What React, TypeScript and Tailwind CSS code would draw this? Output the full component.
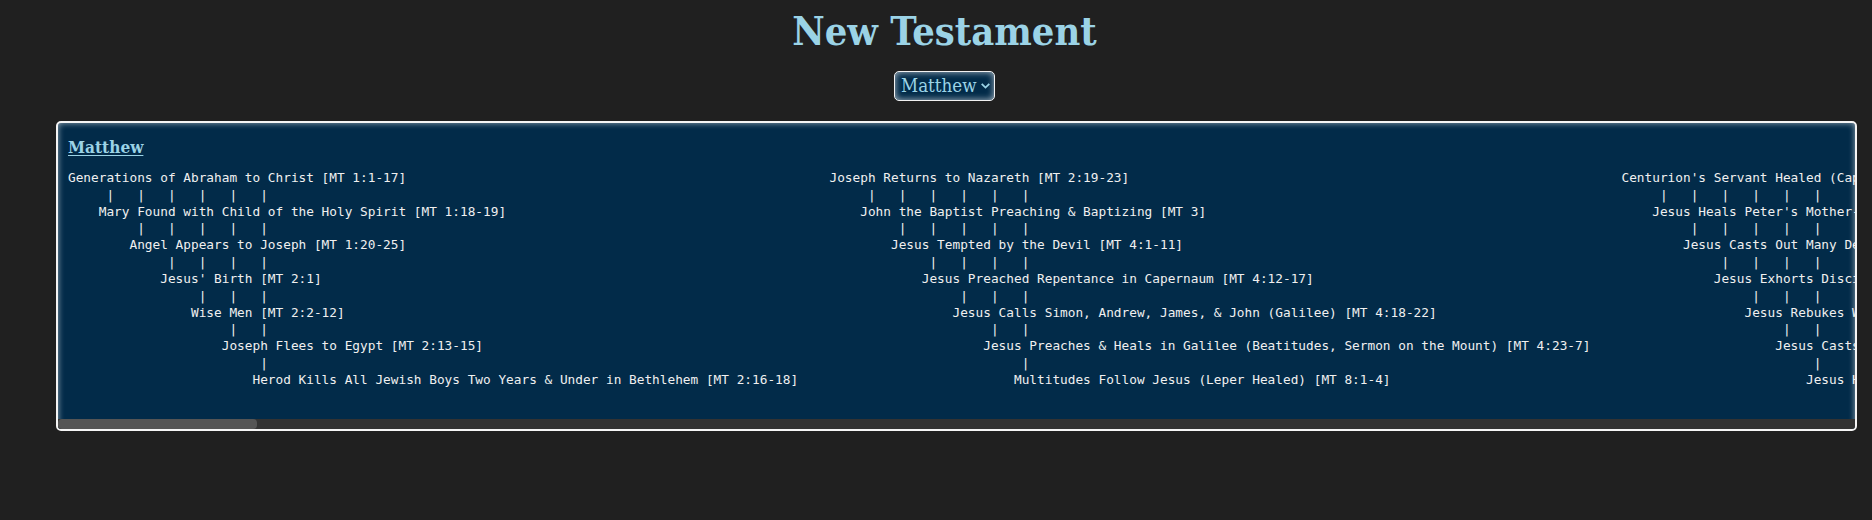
import React from "react";

type Column = { width: string; events: string[] };

const columns: Column[] = [
  {
    width: "w-[761.5px]",
    events: [
      "Generations of Abraham to Christ [MT 1:1-17]",
      "Mary Found with Child of the Holy Spirit [MT 1:18-19]",
      "Angel Appears to Joseph [MT 1:20-25]",
      "Jesus' Birth [MT 2:1]",
      "Wise Men [MT 2:2-12]",
      "Joseph Flees to Egypt [MT 2:13-15]",
      "Herod Kills All Jewish Boys Two Years & Under in Bethlehem [MT 2:16-18]",
    ],
  },
  {
    width: "w-[792px]",
    events: [
      "Joseph Returns to Nazareth [MT 2:19-23]",
      "John the Baptist Preaching & Baptizing [MT 3]",
      "Jesus Tempted by the Devil [MT 4:1-11]",
      "Jesus Preached Repentance in Capernaum [MT 4:12-17]",
      "Jesus Calls Simon, Andrew, James, & John (Galilee) [MT 4:18-22]",
      "Jesus Preaches & Heals in Galilee (Beatitudes, Sermon on the Mount) [MT 4:23-7]",
      "Multitudes Follow Jesus (Leper Healed) [MT 8:1-4]",
    ],
  },
  {
    width: "w-[792px]",
    events: [
      "Centurion's Servant Healed (Cap",
      "Jesus Heals Peter's Mother-",
      "Jesus Casts Out Many De",
      "Jesus Exhorts Disci",
      "Jesus Rebukes W",
      "Jesus Casts",
      "Jesus H",
    ],
  },
];

function cascade(events: string[]): string {
  const lines: string[] = [];
  events.forEach((event, i) => {
    lines.push(" ".repeat(i * 4) + event);
    const bars = events.length - 1 - i;
    if (bars > 0) {
      lines.push(" ".repeat(5 + i * 4) + Array(bars).fill("|").join("   "));
    }
  });
  return lines.join("\n");
}

export default function App() {
  return (
    <main className="flex h-[520px] flex-col overflow-hidden bg-[#202020] font-['DejaVu_Serif_Condensed','DejaVu_Serif',serif] text-[#9bd3e6]">
      <header className="flex flex-col items-center pl-[17px]">
        <h1 className="mt-[6px] h-[50px] whitespace-nowrap text-[39.5px] font-bold leading-[50px] [font-stretch:condensed]">
          New Testament
        </h1>
        <button className="mt-[15px] flex h-[30px] w-[101px] items-center justify-between rounded-[5px] border border-[#f2f2f2] bg-[#022b49] pr-[4px] pl-[6px] text-[18.6px] leading-none [font-stretch:condensed] shadow-[inset_0_0_7px_rgba(255,255,255,0.7)]">
          <span className="pt-px">Matthew</span>
          <svg width="9" height="6" viewBox="0 0 9 6" fill="none" stroke="currentColor" strokeWidth="1.8">
            <path d="M0.7 0.8 4.5 4.6 8.3 0.8" />
          </svg>
        </button>
      </header>

      <section className="mt-[20px] ml-[56px] flex h-[310px] w-[1801px] flex-col overflow-hidden rounded-[5px] border-2 border-[#f5f5f5] bg-[#022b49] shadow-[inset_0_0_6px_rgba(255,255,255,0.6)]">
        <h2 className="mt-[12px] ml-[10px] h-[24px] text-[17.1px] font-bold leading-[24px] underline decoration-1 underline-offset-2 [font-stretch:condensed]">
          Matthew
        </h2>
        <div className="mt-[11px] ml-[10px] flex flex-1 overflow-hidden">
          {columns.map((column) => (
            <pre
              key={column.events[0]}
              className={`${column.width} shrink-0 font-['DejaVu_Sans_Mono',monospace] text-[12.785px] leading-[16.83px] text-[#f0f0f0]`}
            >
              {cascade(column.events)}
            </pre>
          ))}
        </div>
        <div className="h-[10px] shrink-0 bg-[#333333]">
          <div className="h-full w-[199px] rounded-[4px] bg-[#555555]" />
        </div>
      </section>
    </main>
  );
}
